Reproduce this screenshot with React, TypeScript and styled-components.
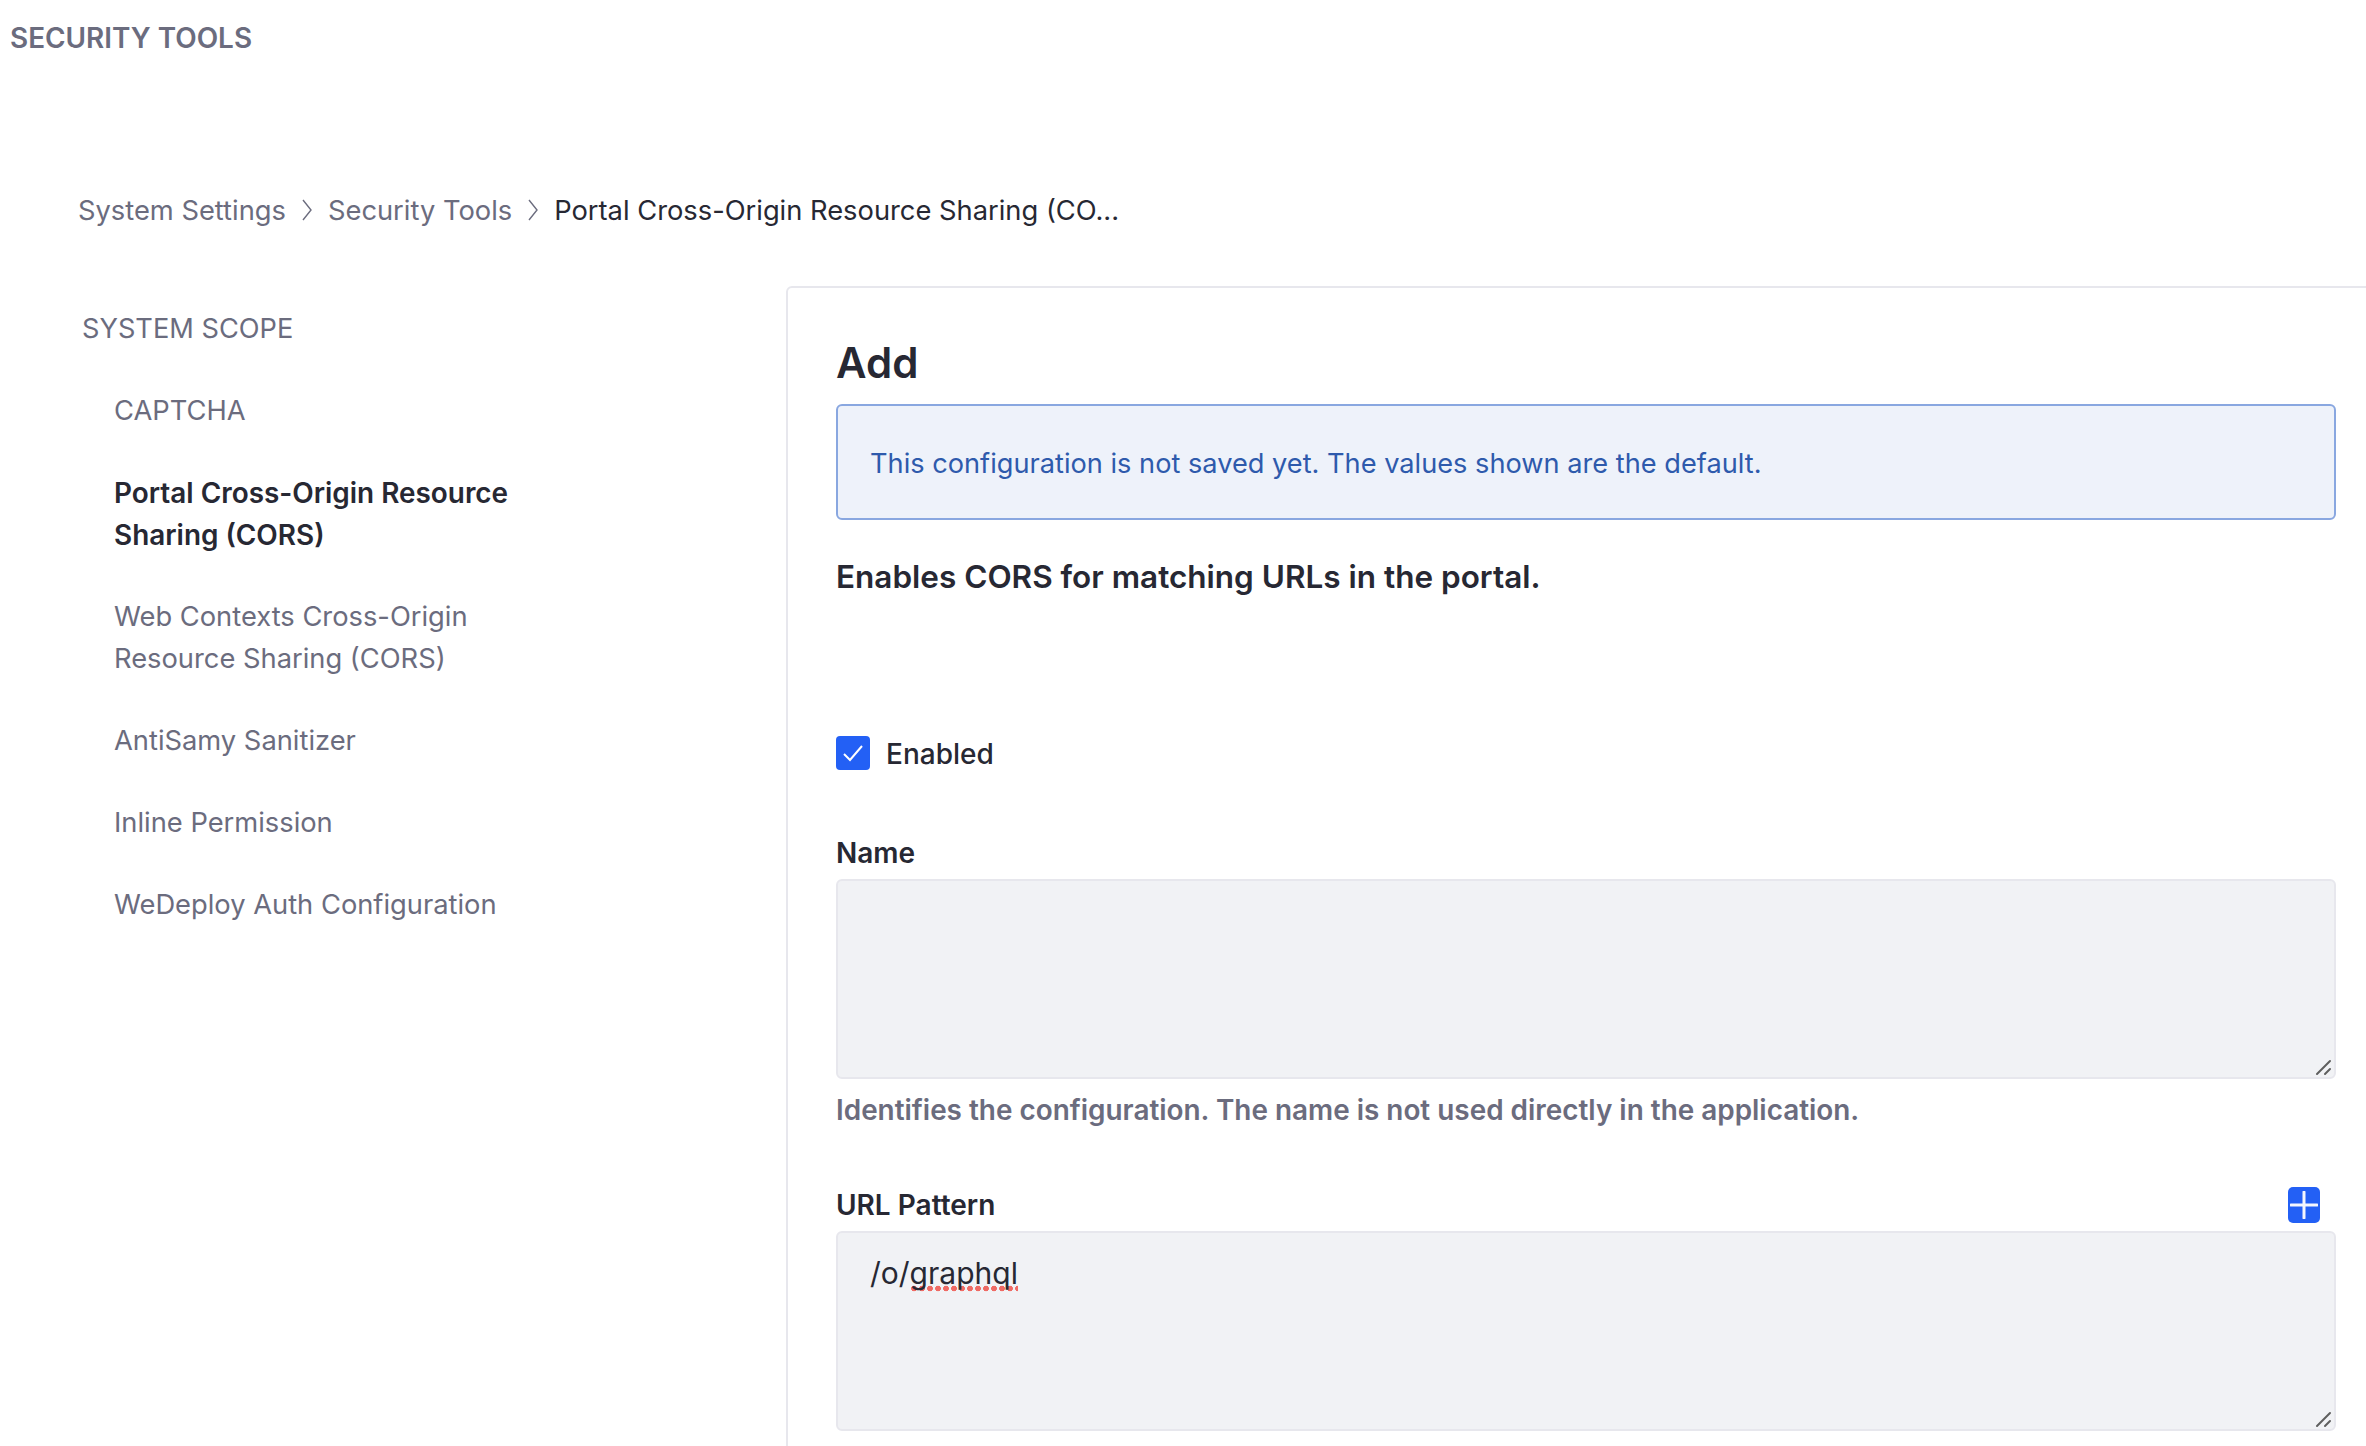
import React from "react"
import styled, { createGlobalStyle } from "styled-components"

const GlobalStyle = createGlobalStyle`
    html, body {
        margin: 0;
        padding: 0;
        height: 100%;
        background: #fff;
        overflow: hidden;
    }
    body {
        font-family: "Inter", "Liberation Sans", sans-serif;
        color: #272833;
    }
`

const Page = styled.div`
    width: 2366px;
    height: 1446px;
    overflow: hidden;
`

const PageTitle = styled.div`
    padding: 20px 0 0 10px;
    height: 37px;
    line-height: 37px;
    font-size: 27.9px;
    font-weight: 600;
    color: #6b6c7e;
`

const Breadcrumb = styled.nav`
    display: flex;
    align-items: center;
    margin-top: 132px;
    padding-left: 78px;
    height: 42px;
    font-size: 27.3px;
    color: #6b6c7e;
`

const Crumb = styled.span<{ $active?: boolean }>`
    color: ${props => (props.$active ? "#272833" : "#6b6c7e")};
`

const CrumbArrow = styled.svg`
    width: 14px;
    height: 24px;
    margin: 0 14px;
`

const Columns = styled.div`
    display: flex;
    align-items: flex-start;
    margin-top: 55px;
`

const Sidebar = styled.aside`
    width: 786px;
    flex: none;
    padding: 22px 0 0 82px;
    box-sizing: border-box;
`

const ScopeTitle = styled.div`
    font-size: 27.2px;
    line-height: 42px;
    color: #6b6c7e;
    margin-bottom: 40px;
`

const NavList = styled.ul`
    list-style: none;
    margin: 0;
    padding: 0 0 0 32px;
    width: 420px;
`

const NavItem = styled.li<{ $active?: boolean }>`
    font-size: ${props => (props.$active ? "27.9px" : "27.3px")};
    line-height: 42px;
    margin-bottom: 40px;
    color: ${props => (props.$active ? "#272833" : "#6b6c7e")};
    font-weight: ${props => (props.$active ? 600 : 400)};
`

const Panel = styled.main`
    flex: 1;
    min-height: 1300px;
    margin-right: -24px;
    padding: 48px 52px 0 48px;
    border: 2px solid #e7e7ed;
    border-radius: 6px;
    background: #fff;
`

const Heading = styled.h2`
    margin: 0;
    font-size: 42px;
    line-height: 54px;
    font-weight: 600;
    color: #272833;
`

const Alert = styled.div`
    margin-top: 14px;
    height: 116px;
    display: flex;
    align-items: center;
    padding: 2px 32px 0;
    box-sizing: border-box;
    background: #eef2fa;
    border: 2px solid #89a7e0;
    border-radius: 6px;
    font-size: 27.2px;
    color: #2e5aac;
`

const Description = styled.p`
    margin: 36px 0 0;
    font-size: 31.5px;
    line-height: 42px;
    font-weight: 600;
    color: #272833;
`

const CheckRow = styled.label`
    display: flex;
    align-items: flex-start;
    gap: 16px;
    margin-top: 138px;
    height: 34px;
    font-size: 28px;
    font-weight: 500;
    line-height: 37px;
    color: #272833;
`

const CheckBox = styled.span`
    display: flex;
    align-items: center;
    justify-content: center;
    width: 34px;
    height: 34px;
    border-radius: 4px;
    background: #2360f5;
`

const Field = styled.div<{ $gap: number }>`
    margin-top: ${props => props.$gap}px;
`

const FieldLabelRow = styled.div`
    display: flex;
    align-items: center;
    justify-content: space-between;
    height: 36px;
    margin-bottom: 8.5px;
`

const FieldLabel = styled.label`
    font-size: 28px;
    font-weight: 600;
    color: #272833;
`

const TextArea = styled.div`
    position: relative;
    height: 200px;
    box-sizing: border-box;
    padding: 19px 32px;
    background: #f1f2f5;
    border: 2px solid #e7e7ed;
    border-radius: 6px;
    font-size: 30px;
    line-height: 42px;
    color: #272833;
`

const ResizeGrip = styled.svg`
    position: absolute;
    right: 1px;
    bottom: 1px;
    width: 18px;
    height: 18px;
`

const SpellError = styled.span`
    background-image: radial-gradient(circle, #ef6a64 2.6px, transparent 3.1px);
    background-size: 8px 7px;
    background-repeat: repeat-x;
    background-position: left bottom 1px;
    padding-bottom: 2px;
`

const HelpText = styled.div`
    margin-top: 10px;
    font-size: 27.9px;
    line-height: 42px;
    font-weight: 600;
    color: #6b6c7e;
`

const AddButton = styled.button`
    display: flex;
    align-items: center;
    justify-content: center;
    width: 32px;
    height: 36px;
    margin-right: 16px;
    padding: 0;
    border: 0;
    border-radius: 5px;
    background: #2360f5;
`

const Grip = () => (
    <ResizeGrip viewBox="0 0 18 18">
        <path d="M2 16 L15 3 M10 16 L15 11" stroke="#5f5f5f" strokeWidth="2" strokeLinecap="round" fill="none" />
    </ResizeGrip>
)

const Arrow = () => (
    <CrumbArrow viewBox="0 0 14 24">
        <polyline points="3,2 11,12 3,22" fill="none" stroke="#6b6c7e" strokeWidth="1.4" />
    </CrumbArrow>
)

const App: React.FunctionComponent = () => {
    return <>
    <GlobalStyle />
    <Page>
        <PageTitle>SECURITY TOOLS</PageTitle>
        <Breadcrumb>
            <Crumb>System Settings</Crumb>
            <Arrow />
            <Crumb>Security Tools</Crumb>
            <Arrow />
            <Crumb $active>Portal Cross-Origin Resource Sharing (CO...</Crumb>
        </Breadcrumb>
        <Columns>
            <Sidebar>
                <ScopeTitle>SYSTEM SCOPE</ScopeTitle>
                <NavList>
                    <NavItem>CAPTCHA</NavItem>
                    <NavItem $active>Portal Cross-Origin Resource Sharing (CORS)</NavItem>
                    <NavItem>Web Contexts Cross-Origin Resource Sharing (CORS)</NavItem>
                    <NavItem>AntiSamy Sanitizer</NavItem>
                    <NavItem>Inline Permission</NavItem>
                    <NavItem>WeDeploy Auth Configuration</NavItem>
                </NavList>
            </Sidebar>
            <Panel>
                <Heading>Add</Heading>
                <Alert>This configuration is not saved yet. The values shown are the default.</Alert>
                <Description>Enables CORS for matching URLs in the portal.</Description>
                <CheckRow>
                    <CheckBox>
                        <svg width="24" height="24" viewBox="0 0 24 24">
                            <polyline points="3,13 9,19 21,5" fill="none" stroke="#fff" strokeWidth="2" />
                        </svg>
                    </CheckBox>
                    Enabled
                </CheckRow>
                <Field $gap={64.5}>
                    <FieldLabelRow>
                        <FieldLabel>Name</FieldLabel>
                    </FieldLabelRow>
                    <TextArea><Grip /></TextArea>
                    <HelpText>Identifies the configuration. The name is not used directly in the application.</HelpText>
                </Field>
                <Field $gap={55.5}>
                    <FieldLabelRow>
                        <FieldLabel>URL Pattern</FieldLabel>
                        <AddButton aria-label="Add">
                            <svg width="28" height="28" viewBox="0 0 28 28">
                                <path d="M14 1 V27 M1 14 H27" stroke="#f4f6fd" strokeWidth="3" strokeLinecap="round" />
                            </svg>
                        </AddButton>
                    </FieldLabelRow>
                    <TextArea>/o/<SpellError>graphql</SpellError><Grip /></TextArea>
                </Field>
            </Panel>
        </Columns>
    </Page>
    </>
}

export default App
